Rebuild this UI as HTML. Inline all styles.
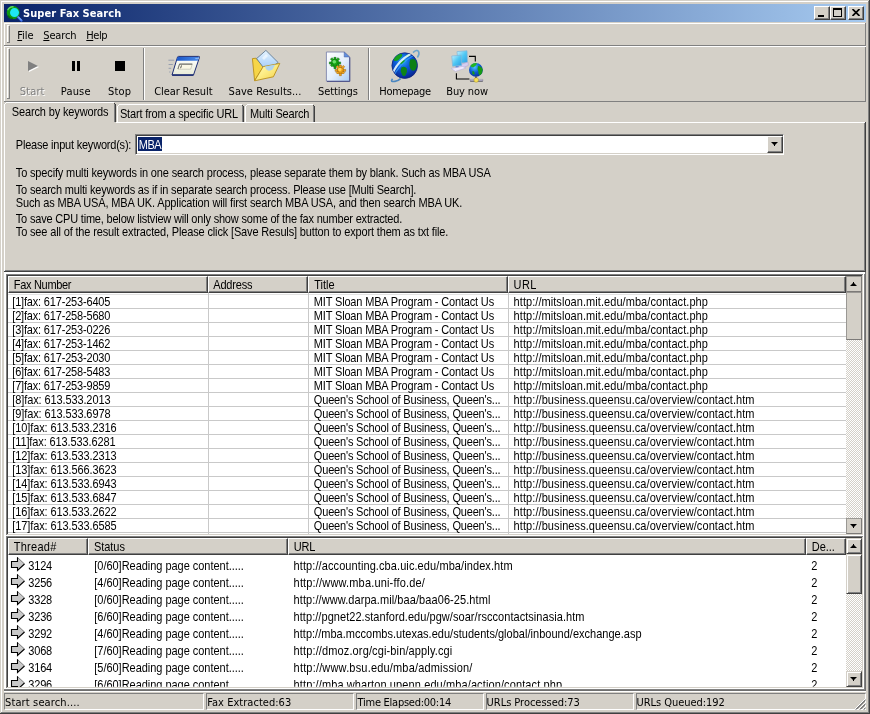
<!DOCTYPE html>
<html><head><meta charset="utf-8"><title>Super Fax Search</title>
<style>
html,body{margin:0;padding:0}
body{width:870px;height:714px;overflow:hidden;background:#d4d0c8;position:relative;
 font-family:"Liberation Sans",sans-serif;font-size:11px;color:#000;line-height:13px}
#win{position:absolute;left:0;top:0;width:870px;height:714px;will-change:transform}
.a{position:absolute}
.t{position:absolute;white-space:nowrap;line-height:13px;height:13px}
.ms{font-size:11px;transform:scaleY(1.1);transform-origin:0 0;margin-top:-1px}
.ta{font-size:11px;font-family:"DejaVu Sans Condensed","DejaVu Sans","Liberation Sans",sans-serif;font-stretch:condensed}
.hl{position:absolute;height:1px}
.vl{position:absolute;width:1px}
.btn{position:absolute;box-sizing:border-box;background:#d4d0c8;border:1px solid;border-color:#fff #404040 #404040 #fff;box-shadow:inset -1px -1px 0 #808080}
.sbtn{position:absolute;box-sizing:border-box;background:#d4d0c8;border:1px solid;border-color:#9a9894 #7c7a78 #7c7a78 #9a9894}
.sb3{position:absolute;box-sizing:border-box;background:#d4d0c8;border:1px solid;border-color:#d4d0c8 #404040 #404040 #d4d0c8;box-shadow:inset 1px 1px 0 #fff, inset -1px -1px 0 #808080}
.hd{position:absolute;box-sizing:border-box;height:17px;background:#d4d0c8;border:1px solid;border-color:#fff #404040 #404040 #fff;box-shadow:inset -1px -1px 0 #808080}
.track{position:absolute;background:#fff;background-image:repeating-conic-gradient(#d4d0c8 0% 25%, #fff 0% 50%);background-size:2px 2px}
.sp{position:absolute;box-sizing:border-box;height:17px;border:1px solid;border-color:#808080 #fff #fff #808080}
</style></head>
<body>
<div id="win">
<div class="vl" style="left:0px;top:0px;height:714px;background:#d4d0c8"></div>
<div class="hl" style="left:0px;top:0px;width:870px;background:#d4d0c8"></div>
<div class="hl" style="left:1px;top:1px;width:868px;background:#fff"></div>
<div class="vl" style="left:1px;top:1px;height:712px;background:#fff"></div>
<div class="vl" style="left:869px;top:0px;height:714px;background:#404040"></div>
<div class="hl" style="left:0px;top:713px;width:870px;background:#404040"></div>
<div class="vl" style="left:868px;top:1px;height:712px;background:#808080"></div>
<div class="hl" style="left:1px;top:712px;width:868px;background:#808080"></div>
<div class="a" style="left:4px;top:4px;width:862px;height:18px;background:linear-gradient(to right,#0a246a,#a6caf0)"></div>
<svg class="a" style="left:5px;top:4px" width="18" height="18" viewBox="0 0 18 18">
<circle cx="8.2" cy="8.6" r="6.5" fill="#0f9a12"/>
<path d="M2.6 6.2 A6 6 0 0 1 8.6 2.8" stroke="#5fd85f" stroke-width="1.3" fill="none"/>
<path d="M3 11.6 A6 6 0 0 0 8 14.6" stroke="#0a6a0c" stroke-width="1.2" fill="none"/>
<circle cx="9.5" cy="8.6" r="4.5" fill="#1ee6f2"/>
<path d="M13.2 13.2 L16.4 16.6" stroke="#3f72f0" stroke-width="2.2" stroke-linecap="round"/>
<path d="M13.6 13 L16.4 16" stroke="#a8d4ff" stroke-width="0.8" stroke-linecap="round"/>
</svg>
<div class="t ta" style="left:23.0px;top:7px;color:#fff;font-weight:bold;letter-spacing:0.07px">Super Fax Search</div>
<div class="btn" style="left:814px;top:6px;width:16px;height:14px"></div>
<div class="btn" style="left:830px;top:6px;width:16px;height:14px"></div>
<div class="btn" style="left:848px;top:6px;width:16px;height:14px"></div>
<div class="a" style="left:818px;top:15px;width:6px;height:2px;background:#000"></div>
<div class="a" style="left:833px;top:8px;width:9px;height:9px;box-sizing:border-box;border:1px solid #000;border-top-width:2px"></div>
<svg class="a" style="left:852px;top:9px" width="8" height="7" viewBox="0 0 8 7"><path d="M0.5 0 L7.5 7 M7.5 0 L0.5 7" stroke="#000" stroke-width="1.7" fill="none"/></svg>
<div class="hl" style="left:4px;top:23px;width:861px;background:#fff"></div>
<div class="vl" style="left:4px;top:23px;height:78px;background:#fff"></div>
<div class="vl" style="left:865px;top:23px;height:79px;background:#808080"></div>
<div class="vl" style="left:7px;top:26px;height:17px;background:#fff"></div>
<div class="vl" style="left:9px;top:26px;height:17px;background:#808080"></div>
<div class="hl" style="left:7px;top:25px;width:2px;background:#fff"></div>
<div class="hl" style="left:7px;top:42px;width:3px;background:#808080"></div>
<div class="t ta" style="left:17.3px;top:29px;letter-spacing:-0.1px"><u>F</u>ile</div>
<div class="t ta" style="left:43.3px;top:29px;letter-spacing:-0.16px"><u>S</u>earch</div>
<div class="t ta" style="left:86.3px;top:29px;letter-spacing:-0.46px"><u>H</u>elp</div>
<div class="hl" style="left:4px;top:45px;width:862px;background:#808080"></div>
<div class="hl" style="left:4px;top:46px;width:862px;background:#fff"></div>
<div class="vl" style="left:7px;top:49px;height:50px;background:#fff"></div>
<div class="vl" style="left:9px;top:49px;height:50px;background:#808080"></div>
<div class="hl" style="left:7px;top:48px;width:2px;background:#fff"></div>
<div class="hl" style="left:7px;top:98px;width:3px;background:#808080"></div>
<svg class="a" style="left:27px;top:60px" width="14" height="14" viewBox="0 0 14 14"><path d="M2 2 L12 7 L2 12 Z" fill="#fff"/><path d="M1 1 L11 6 L1 11 Z" fill="#808080"/></svg>
<div class="t ta" style="left:19.8px;top:85px;color:#808080;text-shadow:1px 1px 0 #fff;letter-spacing:0.13px">Start</div>
<div class="a" style="left:72px;top:61px;width:3px;height:10px;background:#000"></div><div class="a" style="left:77px;top:61px;width:3px;height:10px;background:#000"></div>
<div class="t ta" style="left:60.8px;top:85px;letter-spacing:0.16px">Pause</div>
<div class="a" style="left:115px;top:61px;width:10px;height:10px;background:#000"></div>
<div class="t ta" style="left:108.0px;top:85px;letter-spacing:0.17px">Stop</div>
<div class="vl" style="left:143px;top:48px;height:52px;background:#808080"></div>
<div class="vl" style="left:144px;top:48px;height:52px;background:#fff"></div>
<div class="vl" style="left:368px;top:48px;height:52px;background:#808080"></div>
<div class="vl" style="left:369px;top:48px;height:52px;background:#fff"></div>
<svg class="a" style="left:160px;top:48px" width="50" height="36" viewBox="160 48 50 36">
<defs>
<linearGradient id="gcr1" x1="0" y1="0" x2="0" y2="1"><stop offset="0" stop-color="#ffffff"/><stop offset="1" stop-color="#e9ecd8"/></linearGradient>
<linearGradient id="gcr2" x1="0" y1="0" x2="1" y2="0"><stop offset="0" stop-color="#1a56c8"/><stop offset="1" stop-color="#4a8ae8"/></linearGradient>
</defs>
<path d="M177.6 56.8 Q177.8 56.4 178.4 56.4 H198.8 Q199.8 56.4 199.5 57.3 L193.5 75 H172 Z" fill="url(#gcr1)" stroke="#1a2a72" stroke-width="1" stroke-linejoin="round"/>
<path d="M177.7 57 H199 L197.8 60.7 H176.5 Z" fill="url(#gcr2)"/>
<path d="M195.6 58.6 h1 m0.9 0 h0.9" stroke="#d8e8ff" stroke-width="0.9"/>
<path d="M172.2 75.1 H193.4" stroke="#1a2a72" stroke-width="1.5"/>
<path d="M179.6 64.2 H192.2 L190.7 69.2 H178 Z" fill="#fbf8e6" stroke="#aaa89a" stroke-width="0.5"/>
<path d="M179.4 64.1 H192.3" stroke="#4a4a4a" stroke-width="0.9"/>
<path d="M179.5 64.1 L177.9 69" stroke="#5a5a5a" stroke-width="0.8"/>
<path d="M181.5 65.4 L180.6 68.2" stroke="#303030" stroke-width="0.8"/>
<path d="M168.4 60.2 H174.2 M168.6 64.5 H172.8 M168.6 68.3 H171.2 M169.2 72 H170.4" stroke="#8f98ac" stroke-width="0.9"/>
</svg>
<svg class="a" style="left:240px;top:44px" width="50" height="40" viewBox="240 44 50 40">
<defs>
<linearGradient id="gsv1" x1="0" y1="0" x2="1" y2="1"><stop offset="0" stop-color="#fff8c0"/><stop offset="0.45" stop-color="#fdee88"/><stop offset="1" stop-color="#f4cf44"/></linearGradient>
<linearGradient id="gsv2" x1="0" y1="0" x2="0" y2="1"><stop offset="0" stop-color="#e4f3ff"/><stop offset="1" stop-color="#9cc8f8"/></linearGradient>
</defs>
<path d="M252.4 58.6 L256.2 58.2 L263.4 66.6 L254.6 80.6 Z" fill="#f6d548" stroke="#b98f1a" stroke-width="0.9" stroke-linejoin="round"/>
<path d="M265.9 50.4 L278.2 62.6 L266 71 L256.6 58.6 Z" fill="url(#gsv2)" stroke="#54708c" stroke-width="0.8" stroke-linejoin="round"/>
<path d="M262 58 l4 -4 l2 2 l-4 4 z" fill="#ffffff" opacity="0.55"/>
<path d="M263.2 66.6 L279.8 63.4 L273.4 76.8 L254.6 80.8 Z" fill="url(#gsv1)" stroke="#b98f1a" stroke-width="0.9" stroke-linejoin="round"/>
<path d="M265 66.6 Q266.5 73 272.5 69.4 L275.4 64.6 Z" fill="#a9d0fa" opacity="0.9"/>
</svg>
<svg class="a" style="left:313px;top:44px" width="50" height="40" viewBox="313 44 50 40">
<defs>
<linearGradient id="gst1" x1="0" y1="0" x2="1" y2="1"><stop offset="0" stop-color="#ffffff"/><stop offset="0.55" stop-color="#e3eefc"/><stop offset="1" stop-color="#a9cdf6"/></linearGradient>
</defs>
<path d="M326.4 52 H344.2 L349.6 57 V81.2 H326.4 Z" fill="url(#gst1)" stroke="#7f86ae" stroke-width="0.9" stroke-linejoin="round"/>
<path d="M327 81.4 H349.8 V57.4" stroke="#4a4f86" stroke-width="1" fill="none"/>
<path d="M344.2 52 L349.6 57 H344.2 Z" fill="#5f8fe0" stroke="#4a5e9c" stroke-width="0.5"/>
<g fill="#19a619" stroke="#0d6d10" stroke-width="0.6" transform="translate(335 63) scale(0.88) translate(-335 -63)">
<circle cx="335" cy="63" r="4.3"/>
<path d="M333.8 56.6 h2.4 v3 h-2.4z M333.8 66.4 h2.4 v3 h-2.4z M328.6 61.8 h3 v2.4 h-3z M338.4 61.8 h3 v2.4 h-3z M329.8 58.6 l1.7 -1.7 l2.1 2.1 l-1.7 1.7z M336.4 65.2 l1.7 -1.7 l2.1 2.1 l-1.7 1.7z M338.5 56.9 l1.7 1.7 l-2.1 2.1 l-1.7 -1.7z M331.9 63.5 l1.7 1.7 l-2.1 2.1 l-1.7 -1.7z"/>
</g>
<circle cx="334.3" cy="61.8" r="1.8" fill="#6be06b"/>
<g fill="#f2a61c" stroke="#a0640c" stroke-width="0.6" transform="translate(340.4 70.4) scale(0.88) translate(-341 -70.2)">
<circle cx="341" cy="70.2" r="4"/>
<path d="M339.9 64.2 h2.2 v2.8 h-2.2z M339.9 73.4 h2.2 v2.8 h-2.2z M335 69.1 h2.8 v2.2 h-2.8z M344.2 69.1 h2.8 v2.2 h-2.8z M336.1 66.1 l1.6 -1.6 l2 2 l-1.6 1.6z M342.3 72.3 l1.6 -1.6 l2 2 l-1.6 1.6z M344.3 64.5 l1.6 1.6 l-2 2 l-1.6 -1.6z M338.1 70.7 l1.6 1.6 l-2 2 l-1.6 -1.6z"/>
</g>
<circle cx="339.8" cy="69.4" r="1.6" fill="#ffd55e"/>
</svg>
<svg class="a" style="left:380px;top:44px" width="50" height="40" viewBox="380 44 50 40">
<defs>
<radialGradient id="ggl1" cx="0.42" cy="0.32" r="0.72"><stop offset="0" stop-color="#2aa8f8"/><stop offset="0.4" stop-color="#0c5cd8"/><stop offset="1" stop-color="#08208c"/></radialGradient><filter id="fgl" x="-20%" y="-20%" width="140%" height="140%"><feGaussianBlur stdDeviation="0.6"/></filter>
<clipPath id="cgl"><circle cx="404.7" cy="65.6" r="12.6"/></clipPath>
</defs>
<path d="M392.6 78.8 Q389.6 82 395 81.4 Q398 81 400.6 78.6" fill="none" stroke="#4a86c0" stroke-width="1.7"/>
<path d="M413 52.6 Q417 49 418.6 51.6 Q419.8 54.2 417.4 57.4" fill="none" stroke="#6aa4cc" stroke-width="1.6"/>
<circle cx="404.7" cy="65.6" r="12.8" fill="url(#ggl1)" stroke="#12267a" stroke-width="0.8"/>
<g clip-path="url(#cgl)">
<g filter="url(#fgl)">
<path d="M394 58 q3 -5 8 -4 q1 2.4 -2 4.4 q-2.4 3 -6 2.4z" fill="#14a01c"/>
<path d="M399.4 62.6 q3 -3 6 -2 q-1 3 -4 4z" fill="#14a01c"/>
<path d="M405.6 55.6 q2.4 -1.8 4.4 -0.6 q-0.6 2.2 -3.6 2.2z" fill="#18a81c"/>
<path d="M401.4 67.6 q3.4 -2 5.4 1 q1 3.4 -1.4 6.8 q-3 2 -3.8 -1.8 q-1.6 -3 -0.2 -6z" fill="#0c8418"/>
<path d="M410.4 59.6 q4 -2 5.8 1.6 q1.6 5 -1 8.8 q-3 2 -5 -1.6 q-1.8 -4 0.2 -8.8z" fill="#0c8018"/>
</g>
<path d="M391.4 77 Q396 60.6 414.4 52" fill="none" stroke="#dff6ff" stroke-width="2.2" opacity="0.92"/>
<path d="M392.6 78.6 Q398.4 63.6 415.4 54.2" fill="none" stroke="#3aa4ff" stroke-width="1.2" opacity="0.75"/>
</g>
</svg>
<svg class="a" style="left:442px;top:44px" width="50" height="40" viewBox="442 44 50 40">
<defs>
<linearGradient id="gbn1" x1="0" y1="0" x2="1" y2="1"><stop offset="0" stop-color="#c8f2ff"/><stop offset="0.5" stop-color="#4fc8f4"/><stop offset="1" stop-color="#2a9ce0"/></linearGradient>
<radialGradient id="gbn2" cx="0.4" cy="0.3" r="0.8"><stop offset="0" stop-color="#4ac8ff"/><stop offset="0.5" stop-color="#0c58d0"/><stop offset="1" stop-color="#0a2a90"/></radialGradient>
<clipPath id="cbn"><circle cx="475.9" cy="69.9" r="6.9"/></clipPath>
</defs>
<path d="M469 56.4 H475.3 V61.4" fill="none" stroke="#000" stroke-width="1.1"/>
<path d="M456.4 73.2 V79 H469.4" fill="none" stroke="#000" stroke-width="1.1"/>
<path d="M457 51.6 L467 50.8 L467.4 62.4 L458 63.2 Z" fill="url(#gbn1)" stroke="#7fb4d8" stroke-width="0.7"/>
<path d="M458 65.4 L468 62 L468.4 65.4 L460 69 Z" fill="#d4cdf0" stroke="#a8a0d0" stroke-width="0.5"/>
<path d="M451.8 56 L461.2 55.2 L461.6 65.4 L452.6 66.2 Z" fill="url(#gbn1)" stroke="#7fb4d8" stroke-width="0.7"/>
<path d="M455.6 66 h3 v2.2 h-3z" fill="#5f8fd8"/>
<path d="M451.2 68.4 L462.4 66.4 L466 68 L455.4 71.4 Z" fill="#eeeafc" stroke="#b0a8d8" stroke-width="0.5"/>
<circle cx="475.9" cy="69.9" r="6.9" fill="url(#gbn2)"/>
<g clip-path="url(#cbn)">
<path d="M470 65 q3 -4 7 -2.6 q0 3 -3 4.6 q-3 1 -4 -2z" fill="#22b422"/>
<path d="M478 66 q3 0 5 3 q0 4 -2.6 6.4 q-2.4 -1 -2 -4 q-1.4 -3 -0.4 -5.4z" fill="#169a16"/>
<path d="M472.4 71 q2 0 2.4 2.4 q-1 2 -2.4 0.6z" fill="#169a16"/>
</g>
<path d="M475.2 76.4 h1.6 v3 h-1.6z" fill="#303060"/>
<path d="M470.2 79.4 H482.8 V81 H470.2 Z" fill="#dcd6f4" stroke="#6a6a7a" stroke-width="0.4"/>
<path d="M470.2 81.2 H482.8" stroke="#404050" stroke-width="0.8"/>
<circle cx="476.2" cy="80" r="2.3" fill="#f6e05a" stroke="#b09820" stroke-width="0.5"/>
</svg>

<div class="t ta" style="left:154.3px;top:85px;letter-spacing:-0.12px">Clear Result</div>
<div class="t ta" style="left:228.6px;top:85px;letter-spacing:0.02px">Save Results...</div>
<div class="t ta" style="left:318.0px;top:85px;letter-spacing:-0.09px">Settings</div>
<div class="t ta" style="left:379.3px;top:85px;letter-spacing:-0.32px">Homepage</div>
<div class="t ta" style="left:446.3px;top:85px;letter-spacing:-0.13px">Buy now</div>
<div class="hl" style="left:4px;top:101px;width:862px;background:#808080"></div>
<div class="hl" style="left:4px;top:122px;width:861px;background:#fff"></div>
<div class="vl" style="left:4px;top:122px;height:149px;background:#fff"></div>
<div class="vl" style="left:864px;top:123px;height:148px;background:#808080"></div>
<div class="vl" style="left:865px;top:122px;height:150px;background:#404040"></div>
<div class="hl" style="left:5px;top:270px;width:860px;background:#808080"></div>
<div class="hl" style="left:4px;top:271px;width:862px;background:#404040"></div>
<div class="a" style="left:4px;top:102px;width:112px;height:21px;background:#d4d0c8"></div>
<div class="hl" style="left:6px;top:102px;width:108px;background:#fff"></div>
<div class="vl" style="left:4px;top:104px;height:19px;background:#fff"></div>
<div class="a" style="left:5px;top:103px;width:1px;height:1px;background:#fff"></div>
<div class="vl" style="left:114px;top:104px;height:18px;background:#808080"></div>
<div class="vl" style="left:115px;top:104px;height:18px;background:#404040"></div>
<div class="a" style="left:114px;top:103px;width:1px;height:1px;background:#404040"></div>
<div class="t ms" style="left:11.8px;top:106px;letter-spacing:-0.14px">Search by keywords</div>
<div class="hl" style="left:119px;top:104px;width:123px;background:#fff"></div>
<div class="vl" style="left:117px;top:106px;height:16px;background:#fff"></div>
<div class="a" style="left:118px;top:105px;width:1px;height:1px;background:#fff"></div>
<div class="vl" style="left:242px;top:106px;height:16px;background:#808080"></div>
<div class="vl" style="left:243px;top:106px;height:16px;background:#404040"></div>
<div class="a" style="left:242px;top:105px;width:1px;height:1px;background:#404040"></div>
<div class="t ms" style="left:119.9px;top:108px;letter-spacing:-0.17px">Start from a specific URL</div>
<div class="hl" style="left:247px;top:104px;width:66px;background:#fff"></div>
<div class="vl" style="left:245px;top:106px;height:16px;background:#fff"></div>
<div class="a" style="left:246px;top:105px;width:1px;height:1px;background:#fff"></div>
<div class="vl" style="left:313px;top:106px;height:16px;background:#808080"></div>
<div class="vl" style="left:314px;top:106px;height:16px;background:#404040"></div>
<div class="a" style="left:313px;top:105px;width:1px;height:1px;background:#404040"></div>
<div class="t ms" style="left:250.1px;top:108px;letter-spacing:-0.16px">Multi Search</div>
<div class="t ms" style="left:15.8px;top:139px;letter-spacing:-0.21px">Please input keyword(s):</div>
<div class="a" style="left:135px;top:134px;width:649px;height:21px;box-sizing:border-box;background:#fff;border:1px solid;border-color:#808080 #fff #fff #808080;box-shadow:inset 1px 1px 0 #404040, inset -1px -1px 0 #d4d0c8"></div>
<div class="a" style="left:138px;top:137px;width:24px;height:14px;background:#0a246a"></div>
<div class="t ms" style="left:138.8px;top:139px;color:#fff;letter-spacing:-0.57px">MBA</div>
<div class="btn" style="left:767px;top:136px;width:16px;height:17px"></div>
<svg class="a" style="left:771px;top:142px" width="7" height="4" viewBox="0 0 7 4"><path d="M0 0 H7 L3.5 3.5 Z" fill="#000"/><rect x="3" y="3" width="1" height="1" fill="#000"/></svg>
<div class="t ms" style="left:15.8px;top:167px;letter-spacing:-0.15px">To specify multi keywords in one search process, please separate them by blank. Such as MBA USA</div>
<div class="t ms" style="left:15.8px;top:184px;letter-spacing:-0.18px">To search multi keywords as if in separate search process. Please use [Multi Search].</div>
<div class="t ms" style="left:15.8px;top:197px;letter-spacing:-0.14px">Such as MBA USA, MBA UK. Application will first search MBA USA, and then search MBA UK.</div>
<div class="t ms" style="left:15.8px;top:213px;letter-spacing:-0.19px">To save CPU time, below listview will only show some of the fax number extracted.</div>
<div class="t ms" style="left:15.8px;top:226px;letter-spacing:-0.15px">To see all of the result extracted, Please click [Save Resuls] button to export them as txt file.</div>
<div class="hl" style="left:4px;top:272px;width:862px;background:#fff"></div>
<div class="hl" style="left:4px;top:273px;width:862px;background:#fff"></div>
<div class="vl" style="left:4px;top:272px;height:418px;background:#fff"></div>
<div class="vl" style="left:5px;top:272px;height:418px;background:#fff"></div>
<div class="hl" style="left:6px;top:274px;width:858px;background:#808080"></div>
<div class="vl" style="left:6px;top:274px;height:262px;background:#808080"></div>
<div class="hl" style="left:7px;top:275px;width:856px;background:#404040"></div>
<div class="vl" style="left:7px;top:275px;height:260px;background:#404040"></div>
<div class="hl" style="left:6px;top:535px;width:858px;background:#fff"></div>
<div class="vl" style="left:863px;top:274px;height:262px;background:#fff"></div>
<div class="hl" style="left:7px;top:534px;width:856px;background:#d4d0c8"></div>
<div class="vl" style="left:862px;top:275px;height:260px;background:#d4d0c8"></div>
<div class="a" style="left:8px;top:276px;width:854px;height:258px;background:#fff"></div>
<div class="hd" style="left:8px;top:276px;width:200px"></div>
<div class="t ms" style="left:13.8px;top:279px;letter-spacing:-0.31px">Fax Number</div>
<div class="hd" style="left:208px;top:276px;width:100px"></div>
<div class="t ms" style="left:213.3px;top:279px;letter-spacing:-0.19px">Address</div>
<div class="hd" style="left:308px;top:276px;width:200px"></div>
<div class="t ms" style="left:314.3px;top:279px;letter-spacing:-0.04px">Title</div>
<div class="hd" style="left:508px;top:276px;width:338px"></div>
<div class="t ms" style="left:513.6px;top:279px;letter-spacing:0.44px">URL</div>
<div class="hl" style="left:8px;top:294px;width:838px;background:#e2e2e2"></div>
<div class="hl" style="left:8px;top:308px;width:838px;background:#c9c9c9"></div>
<div class="hl" style="left:8px;top:322px;width:838px;background:#c9c9c9"></div>
<div class="hl" style="left:8px;top:336px;width:838px;background:#c9c9c9"></div>
<div class="hl" style="left:8px;top:350px;width:838px;background:#c9c9c9"></div>
<div class="hl" style="left:8px;top:364px;width:838px;background:#c9c9c9"></div>
<div class="hl" style="left:8px;top:378px;width:838px;background:#c9c9c9"></div>
<div class="hl" style="left:8px;top:392px;width:838px;background:#c9c9c9"></div>
<div class="hl" style="left:8px;top:406px;width:838px;background:#c9c9c9"></div>
<div class="hl" style="left:8px;top:420px;width:838px;background:#c9c9c9"></div>
<div class="hl" style="left:8px;top:434px;width:838px;background:#c9c9c9"></div>
<div class="hl" style="left:8px;top:448px;width:838px;background:#c9c9c9"></div>
<div class="hl" style="left:8px;top:462px;width:838px;background:#c9c9c9"></div>
<div class="hl" style="left:8px;top:476px;width:838px;background:#c9c9c9"></div>
<div class="hl" style="left:8px;top:490px;width:838px;background:#c9c9c9"></div>
<div class="hl" style="left:8px;top:504px;width:838px;background:#c9c9c9"></div>
<div class="hl" style="left:8px;top:518px;width:838px;background:#c9c9c9"></div>
<div class="hl" style="left:8px;top:532px;width:838px;background:#c9c9c9"></div>
<div class="vl" style="left:208px;top:293px;height:241px;background:#c9c9c9"></div>
<div class="vl" style="left:308px;top:293px;height:241px;background:#c9c9c9"></div>
<div class="vl" style="left:508px;top:293px;height:241px;background:#c9c9c9"></div>
<div class="t ms" style="left:12.3px;top:296px;letter-spacing:-0.18px">[1]fax: 617-253-6405</div>
<div class="t ms" style="left:313.8px;top:296px;letter-spacing:-0.16px">MIT Sloan MBA Program - Contact Us</div>
<div class="t ms" style="left:513.6px;top:296px;letter-spacing:0.06px">http://mitsloan.mit.edu/mba/contact.php</div>
<div class="t ms" style="left:12.3px;top:310px;letter-spacing:-0.18px">[2]fax: 617-258-5680</div>
<div class="t ms" style="left:313.8px;top:310px;letter-spacing:-0.16px">MIT Sloan MBA Program - Contact Us</div>
<div class="t ms" style="left:513.6px;top:310px;letter-spacing:0.06px">http://mitsloan.mit.edu/mba/contact.php</div>
<div class="t ms" style="left:12.3px;top:324px;letter-spacing:-0.18px">[3]fax: 617-253-0226</div>
<div class="t ms" style="left:313.8px;top:324px;letter-spacing:-0.16px">MIT Sloan MBA Program - Contact Us</div>
<div class="t ms" style="left:513.6px;top:324px;letter-spacing:0.06px">http://mitsloan.mit.edu/mba/contact.php</div>
<div class="t ms" style="left:12.3px;top:338px;letter-spacing:-0.18px">[4]fax: 617-253-1462</div>
<div class="t ms" style="left:313.8px;top:338px;letter-spacing:-0.16px">MIT Sloan MBA Program - Contact Us</div>
<div class="t ms" style="left:513.6px;top:338px;letter-spacing:0.06px">http://mitsloan.mit.edu/mba/contact.php</div>
<div class="t ms" style="left:12.3px;top:352px;letter-spacing:-0.18px">[5]fax: 617-253-2030</div>
<div class="t ms" style="left:313.8px;top:352px;letter-spacing:-0.16px">MIT Sloan MBA Program - Contact Us</div>
<div class="t ms" style="left:513.6px;top:352px;letter-spacing:0.06px">http://mitsloan.mit.edu/mba/contact.php</div>
<div class="t ms" style="left:12.3px;top:366px;letter-spacing:-0.18px">[6]fax: 617-258-5483</div>
<div class="t ms" style="left:313.8px;top:366px;letter-spacing:-0.16px">MIT Sloan MBA Program - Contact Us</div>
<div class="t ms" style="left:513.6px;top:366px;letter-spacing:0.06px">http://mitsloan.mit.edu/mba/contact.php</div>
<div class="t ms" style="left:12.3px;top:380px;letter-spacing:-0.18px">[7]fax: 617-253-9859</div>
<div class="t ms" style="left:313.8px;top:380px;letter-spacing:-0.16px">MIT Sloan MBA Program - Contact Us</div>
<div class="t ms" style="left:513.6px;top:380px;letter-spacing:0.06px">http://mitsloan.mit.edu/mba/contact.php</div>
<div class="t ms" style="left:12.3px;top:394px;letter-spacing:-0.11px">[8]fax: 613.533.2013</div>
<div class="t ms" style="left:313.8px;top:394px;letter-spacing:-0.17px">Queen's School of Business, Queen's...</div>
<div class="t ms" style="left:513.6px;top:394px;letter-spacing:0.08px">http://business.queensu.ca/overview/contact.htm</div>
<div class="t ms" style="left:12.3px;top:408px;letter-spacing:-0.11px">[9]fax: 613.533.6978</div>
<div class="t ms" style="left:313.8px;top:408px;letter-spacing:-0.17px">Queen's School of Business, Queen's...</div>
<div class="t ms" style="left:513.6px;top:408px;letter-spacing:0.08px">http://business.queensu.ca/overview/contact.htm</div>
<div class="t ms" style="left:12.3px;top:422px;letter-spacing:-0.11px">[10]fax: 613.533.2316</div>
<div class="t ms" style="left:313.8px;top:422px;letter-spacing:-0.17px">Queen's School of Business, Queen's...</div>
<div class="t ms" style="left:513.6px;top:422px;letter-spacing:0.08px">http://business.queensu.ca/overview/contact.htm</div>
<div class="t ms" style="left:12.3px;top:436px;letter-spacing:-0.12px">[11]fax: 613.533.6281</div>
<div class="t ms" style="left:313.8px;top:436px;letter-spacing:-0.17px">Queen's School of Business, Queen's...</div>
<div class="t ms" style="left:513.6px;top:436px;letter-spacing:0.08px">http://business.queensu.ca/overview/contact.htm</div>
<div class="t ms" style="left:12.3px;top:450px;letter-spacing:-0.11px">[12]fax: 613.533.2313</div>
<div class="t ms" style="left:313.8px;top:450px;letter-spacing:-0.17px">Queen's School of Business, Queen's...</div>
<div class="t ms" style="left:513.6px;top:450px;letter-spacing:0.08px">http://business.queensu.ca/overview/contact.htm</div>
<div class="t ms" style="left:12.3px;top:464px;letter-spacing:-0.11px">[13]fax: 613.566.3623</div>
<div class="t ms" style="left:313.8px;top:464px;letter-spacing:-0.17px">Queen's School of Business, Queen's...</div>
<div class="t ms" style="left:513.6px;top:464px;letter-spacing:0.08px">http://business.queensu.ca/overview/contact.htm</div>
<div class="t ms" style="left:12.3px;top:478px;letter-spacing:-0.11px">[14]fax: 613.533.6943</div>
<div class="t ms" style="left:313.8px;top:478px;letter-spacing:-0.17px">Queen's School of Business, Queen's...</div>
<div class="t ms" style="left:513.6px;top:478px;letter-spacing:0.08px">http://business.queensu.ca/overview/contact.htm</div>
<div class="t ms" style="left:12.3px;top:492px;letter-spacing:-0.11px">[15]fax: 613.533.6847</div>
<div class="t ms" style="left:313.8px;top:492px;letter-spacing:-0.17px">Queen's School of Business, Queen's...</div>
<div class="t ms" style="left:513.6px;top:492px;letter-spacing:0.08px">http://business.queensu.ca/overview/contact.htm</div>
<div class="t ms" style="left:12.3px;top:506px;letter-spacing:-0.11px">[16]fax: 613.533.2622</div>
<div class="t ms" style="left:313.8px;top:506px;letter-spacing:-0.17px">Queen's School of Business, Queen's...</div>
<div class="t ms" style="left:513.6px;top:506px;letter-spacing:0.08px">http://business.queensu.ca/overview/contact.htm</div>
<div class="t ms" style="left:12.3px;top:520px;letter-spacing:-0.11px">[17]fax: 613.533.6585</div>
<div class="t ms" style="left:313.8px;top:520px;letter-spacing:-0.17px">Queen's School of Business, Queen's...</div>
<div class="t ms" style="left:513.6px;top:520px;letter-spacing:0.08px">http://business.queensu.ca/overview/contact.htm</div>
<div class="track" style="left:846px;top:276px;width:16px;height:258px"></div>
<div class="sbtn" style="left:846px;top:276px;width:16px;height:16px"></div>
<svg class="a" style="left:850px;top:282px" width="7" height="4" viewBox="0 0 7 4"><path d="M0 4 H7 L3.5 0.5 Z" fill="#000"/><rect x="3" y="0" width="1" height="1" fill="#000"/></svg>
<div class="sbtn" style="left:846px;top:518px;width:16px;height:16px"></div>
<svg class="a" style="left:850px;top:524px" width="7" height="4" viewBox="0 0 7 4"><path d="M0 0 H7 L3.5 3.5 Z" fill="#000"/><rect x="3" y="3" width="1" height="1" fill="#000"/></svg>
<div class="sbtn" style="left:846px;top:292px;width:16px;height:48px"></div>
<div class="hl" style="left:6px;top:536px;width:858px;background:#808080"></div>
<div class="hl" style="left:6px;top:536px;width:858px;background:#808080"></div>
<div class="vl" style="left:6px;top:536px;height:153px;background:#808080"></div>
<div class="hl" style="left:7px;top:537px;width:856px;background:#404040"></div>
<div class="vl" style="left:7px;top:537px;height:151px;background:#404040"></div>
<div class="hl" style="left:6px;top:688px;width:858px;background:#fff"></div>
<div class="vl" style="left:863px;top:536px;height:153px;background:#fff"></div>
<div class="hl" style="left:7px;top:687px;width:856px;background:#d4d0c8"></div>
<div class="vl" style="left:862px;top:537px;height:151px;background:#d4d0c8"></div>
<div class="a" style="left:8px;top:538px;width:854px;height:149px;background:#fff"></div>
<div class="hd" style="left:8px;top:538px;width:80px"></div>
<div class="t ms" style="left:13.7px;top:541px;letter-spacing:0.27px">Thread#</div>
<div class="hd" style="left:88px;top:538px;width:200px"></div>
<div class="t ms" style="left:94.1px;top:541px;letter-spacing:-0.08px">Status</div>
<div class="hd" style="left:288px;top:538px;width:518px"></div>
<div class="t ms" style="left:293.8px;top:541px;letter-spacing:-0.16px">URL</div>
<div class="hd" style="left:806px;top:538px;width:40px"></div>
<div class="t ms" style="left:811.8px;top:541px;letter-spacing:-0.03px">De...</div>
<svg class="a" style="left:10px;top:556px" width="16" height="16" viewBox="0 0 16 16"><path d="M1.5 5.5 H7.5 V1.5 L14.5 8 L7.5 14.5 V11.5 H1.5 Z" fill="#c8c8c8"/><path d="M7.5 1.5 L14.5 8" stroke="#707070" stroke-width="0.9" fill="none"/><path d="M14.5 8 L7.5 14.5 V11.5 H1.5 V5.5 H7.5 V1.2" fill="none" stroke="#000" stroke-width="1.1"/></svg>
<div class="t ms" style="left:28.3px;top:560px;letter-spacing:-0.19px">3124</div>
<div class="t ms" style="left:94.3px;top:560px;letter-spacing:-0.03px">[0/60]Reading page content.....</div>
<div class="t ms" style="left:293.6px;top:560px;letter-spacing:0.09px">http://accounting.cba.uic.edu/mba/index.htm</div>
<div class="t ms" style="left:811.3px;top:560px;letter-spacing:-0.15px">2</div>
<svg class="a" style="left:10px;top:573px" width="16" height="16" viewBox="0 0 16 16"><path d="M1.5 5.5 H7.5 V1.5 L14.5 8 L7.5 14.5 V11.5 H1.5 Z" fill="#c8c8c8"/><path d="M7.5 1.5 L14.5 8" stroke="#707070" stroke-width="0.9" fill="none"/><path d="M14.5 8 L7.5 14.5 V11.5 H1.5 V5.5 H7.5 V1.2" fill="none" stroke="#000" stroke-width="1.1"/></svg>
<div class="t ms" style="left:28.3px;top:577px;letter-spacing:-0.19px">3256</div>
<div class="t ms" style="left:94.3px;top:577px;letter-spacing:-0.03px">[4/60]Reading page content.....</div>
<div class="t ms" style="left:293.6px;top:577px;letter-spacing:0.17px">http://www.mba.uni-ffo.de/</div>
<div class="t ms" style="left:811.3px;top:577px;letter-spacing:-0.15px">2</div>
<svg class="a" style="left:10px;top:590px" width="16" height="16" viewBox="0 0 16 16"><path d="M1.5 5.5 H7.5 V1.5 L14.5 8 L7.5 14.5 V11.5 H1.5 Z" fill="#c8c8c8"/><path d="M7.5 1.5 L14.5 8" stroke="#707070" stroke-width="0.9" fill="none"/><path d="M14.5 8 L7.5 14.5 V11.5 H1.5 V5.5 H7.5 V1.2" fill="none" stroke="#000" stroke-width="1.1"/></svg>
<div class="t ms" style="left:28.3px;top:594px;letter-spacing:-0.19px">3328</div>
<div class="t ms" style="left:94.3px;top:594px;letter-spacing:-0.03px">[0/60]Reading page content.....</div>
<div class="t ms" style="left:293.6px;top:594px;letter-spacing:0.08px">http://www.darpa.mil/baa/baa06-25.html</div>
<div class="t ms" style="left:811.3px;top:594px;letter-spacing:-0.15px">2</div>
<svg class="a" style="left:10px;top:607px" width="16" height="16" viewBox="0 0 16 16"><path d="M1.5 5.5 H7.5 V1.5 L14.5 8 L7.5 14.5 V11.5 H1.5 Z" fill="#c8c8c8"/><path d="M7.5 1.5 L14.5 8" stroke="#707070" stroke-width="0.9" fill="none"/><path d="M14.5 8 L7.5 14.5 V11.5 H1.5 V5.5 H7.5 V1.2" fill="none" stroke="#000" stroke-width="1.1"/></svg>
<div class="t ms" style="left:28.3px;top:611px;letter-spacing:-0.19px">3236</div>
<div class="t ms" style="left:94.3px;top:611px;letter-spacing:-0.03px">[6/60]Reading page content.....</div>
<div class="t ms" style="left:293.6px;top:611px;letter-spacing:0.05px">http://pgnet22.stanford.edu/pgw/soar/rsccontactsinasia.htm</div>
<div class="t ms" style="left:811.3px;top:611px;letter-spacing:-0.15px">2</div>
<svg class="a" style="left:10px;top:624px" width="16" height="16" viewBox="0 0 16 16"><path d="M1.5 5.5 H7.5 V1.5 L14.5 8 L7.5 14.5 V11.5 H1.5 Z" fill="#c8c8c8"/><path d="M7.5 1.5 L14.5 8" stroke="#707070" stroke-width="0.9" fill="none"/><path d="M14.5 8 L7.5 14.5 V11.5 H1.5 V5.5 H7.5 V1.2" fill="none" stroke="#000" stroke-width="1.1"/></svg>
<div class="t ms" style="left:28.3px;top:628px;letter-spacing:-0.19px">3292</div>
<div class="t ms" style="left:94.3px;top:628px;letter-spacing:-0.03px">[4/60]Reading page content.....</div>
<div class="t ms" style="left:293.6px;top:628px;letter-spacing:0.02px">http://mba.mccombs.utexas.edu/students/global/inbound/exchange.asp</div>
<div class="t ms" style="left:811.3px;top:628px;letter-spacing:-0.15px">2</div>
<svg class="a" style="left:10px;top:641px" width="16" height="16" viewBox="0 0 16 16"><path d="M1.5 5.5 H7.5 V1.5 L14.5 8 L7.5 14.5 V11.5 H1.5 Z" fill="#c8c8c8"/><path d="M7.5 1.5 L14.5 8" stroke="#707070" stroke-width="0.9" fill="none"/><path d="M14.5 8 L7.5 14.5 V11.5 H1.5 V5.5 H7.5 V1.2" fill="none" stroke="#000" stroke-width="1.1"/></svg>
<div class="t ms" style="left:28.3px;top:645px;letter-spacing:-0.19px">3068</div>
<div class="t ms" style="left:94.3px;top:645px;letter-spacing:-0.03px">[7/60]Reading page content.....</div>
<div class="t ms" style="left:293.6px;top:645px;letter-spacing:0.13px">http://dmoz.org/cgi-bin/apply.cgi</div>
<div class="t ms" style="left:811.3px;top:645px;letter-spacing:-0.15px">2</div>
<svg class="a" style="left:10px;top:658px" width="16" height="16" viewBox="0 0 16 16"><path d="M1.5 5.5 H7.5 V1.5 L14.5 8 L7.5 14.5 V11.5 H1.5 Z" fill="#c8c8c8"/><path d="M7.5 1.5 L14.5 8" stroke="#707070" stroke-width="0.9" fill="none"/><path d="M14.5 8 L7.5 14.5 V11.5 H1.5 V5.5 H7.5 V1.2" fill="none" stroke="#000" stroke-width="1.1"/></svg>
<div class="t ms" style="left:28.3px;top:662px;letter-spacing:-0.19px">3164</div>
<div class="t ms" style="left:94.3px;top:662px;letter-spacing:-0.03px">[5/60]Reading page content.....</div>
<div class="t ms" style="left:293.6px;top:662px;letter-spacing:0.18px">http://www.bsu.edu/mba/admission/</div>
<div class="t ms" style="left:811.3px;top:662px;letter-spacing:-0.15px">2</div>
<svg class="a" style="left:10px;top:675px" width="16" height="12" viewBox="0 0 16 12"><path d="M1.5 5.5 H7.5 V1.5 L14.5 8 L7.5 14.5 V11.5 H1.5 Z" fill="#c8c8c8"/><path d="M7.5 1.5 L14.5 8" stroke="#707070" stroke-width="0.9" fill="none"/><path d="M14.5 8 L7.5 14.5 V11.5 H1.5 V5.5 H7.5 V1.2" fill="none" stroke="#000" stroke-width="1.1"/></svg>
<div class="t ms" style="left:28.3px;top:679px;height:8px;overflow:hidden;letter-spacing:-0.19px">3296</div>
<div class="t ms" style="left:94.3px;top:679px;height:8px;overflow:hidden;letter-spacing:-0.03px">[6/60]Reading page content.....</div>
<div class="t ms" style="left:293.6px;top:679px;height:8px;overflow:hidden;letter-spacing:0.11px">http://mba.wharton.upenn.edu/mba/action/contact.php</div>
<div class="t ms" style="left:811.3px;top:679px;height:8px;overflow:hidden;letter-spacing:-0.15px">2</div>
<div class="a" style="left:8px;top:687px;width:854px;height:1px;background:#d4d0c8"></div>
<div class="hl" style="left:6px;top:688px;width:858px;background:#fff"></div>
<div class="a" style="left:4px;top:689px;width:862px;height:21px;background:#d4d0c8"></div>
<div class="track" style="left:846px;top:538px;width:16px;height:149px"></div>
<div class="sb3" style="left:846px;top:538px;width:16px;height:16px"></div>
<svg class="a" style="left:850px;top:544px" width="7" height="4" viewBox="0 0 7 4"><path d="M0 4 H7 L3.5 0.5 Z" fill="#000"/><rect x="3" y="0" width="1" height="1" fill="#000"/></svg>
<div class="sb3" style="left:846px;top:671px;width:16px;height:16px"></div>
<svg class="a" style="left:850px;top:677px" width="7" height="4" viewBox="0 0 7 4"><path d="M0 0 H7 L3.5 3.5 Z" fill="#000"/><rect x="3" y="3" width="1" height="1" fill="#000"/></svg>
<div class="sb3" style="left:846px;top:554px;width:16px;height:40px"></div>
<div class="hl" style="left:4px;top:689px;width:862px;background:#808080"></div>
<div class="hl" style="left:4px;top:690px;width:862px;background:#707070"></div>
<div class="hl" style="left:4px;top:691px;width:862px;background:#fff"></div>
<div class="vl" style="left:864px;top:274px;height:416px;background:#848484"></div>
<div class="vl" style="left:865px;top:272px;height:419px;background:#707070"></div>
<div class="sp" style="left:4px;top:693px;width:200px"></div>
<div class="t ta" style="left:5.0px;top:696px;letter-spacing:0.13px">Start search....</div>
<div class="sp" style="left:206px;top:693px;width:148px"></div>
<div class="t ta" style="left:207.3px;top:696px;letter-spacing:0.03px">Fax Extracted:63</div>
<div class="sp" style="left:356px;top:693px;width:128px"></div>
<div class="t ta" style="left:357.6px;top:696px;letter-spacing:-0.26px">Time Elapsed:00:14</div>
<div class="sp" style="left:486px;top:693px;width:148px"></div>
<div class="t ta" style="left:486.6px;top:696px;letter-spacing:-0.03px">URLs Processed:73</div>
<div class="sp" style="left:636px;top:693px;width:230px"></div>
<div class="t ta" style="left:636.6px;top:696px;letter-spacing:-0.05px">URLs Queued:192</div>
<svg class="a" style="left:853px;top:697px" width="13" height="13" viewBox="0 0 13 13"><g stroke-width="1"><path d="M12.5 1.5 L1.5 12.5 M12.5 5.5 L5.5 12.5 M12.5 9.5 L9.5 12.5" stroke="#fff"/><path d="M12.5 2.5 L2.5 12.5 M12.5 3.5 L3.5 12.5 M12.5 6.5 L6.5 12.5 M12.5 7.5 L7.5 12.5 M12.5 10.5 L10.5 12.5 M12.5 11.5 L11.5 12.5" stroke="#808080"/></g></svg>
</div>
</body></html>
